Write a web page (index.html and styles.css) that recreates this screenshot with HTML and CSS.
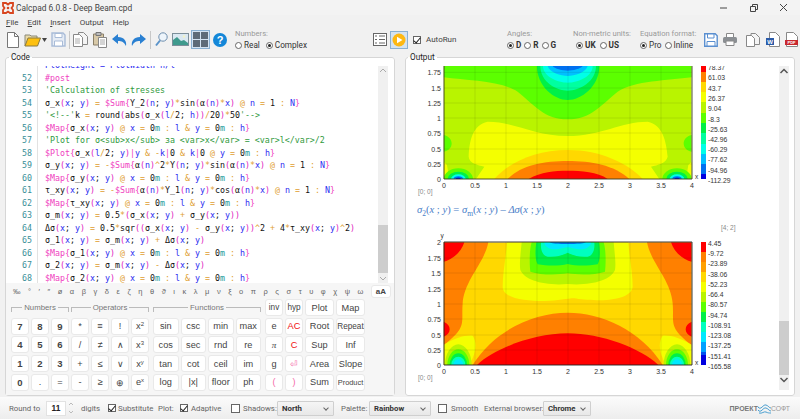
FILE: index.html
```html
<!DOCTYPE html>
<html lang="en">
<head>
<meta charset="utf-8">
<title>Calcpad 6.0.8 - Deep Beam.cpd</title>
<link rel="stylesheet" href="styles.css">
</head>
<body>
<div class="app">
  <header class="titlebar">
    <svg class="app-icon" width="12" height="12" viewBox="0 0 12 12"><path d="M1 1h3l2 1.500L8 1h3v3L9.500 6 11 8v3H8L6 9.500 4 11H1V8l1.500-2L1 4z" fill="none" stroke="#d8451f" stroke-width="1.800"/><circle cx="6" cy="6" r="1.300" fill="#d8451f"/></svg>
    <span class="title">Calcpad 6.0.8 - Deep Beam.cpd</span>
    <span class="win-btns">
      <svg width="10" height="10" viewBox="0 0 10 10"><path d="M1 5h7" stroke="#444" fill="none"/></svg>
      <svg width="10" height="10" viewBox="0 0 10 10"><path d="M1.500 3.500h5v5h-5zM3.500 3.500v-2h5v5h-2" stroke="#444" fill="none"/></svg>
      <svg width="10" height="10" viewBox="0 0 10 10"><path d="M1 1l7 7M8 1l-7 7" stroke="#444" fill="none"/></svg>
    </span>
  </header>
  <nav class="menu">
    <span><u>F</u>ile</span><span><u>E</u>dit</span><span><u>I</u>nsert</span><span>Output</span><span>Help</span>
  </nav>
  <div class="toolbar">
    <svg class="ic m-new" width="12" height="16" viewBox="0 0 12 16"><path d="M.5.500h7l4 4v11H.500z" fill="#fff" stroke="#777"/><path d="M7.500.500v4h4" fill="none" stroke="#777"/></svg>
    <svg class="ic m-open" width="17" height="14" viewBox="0 0 17 14"><path d="M1 13V2h5l1 1h6v2" fill="#e8d9a8" stroke="#8a8a7a"/><path d="M1 13l3-8h12.500l-3 8z" fill="#fdc010" stroke="#8a7a40"/></svg>
    <svg class="ic m-arrow" width="5" height="4" viewBox="0 0 5 4"><path d="M0 0h5L2.500 4z" fill="#444"/></svg>
    <svg class="ic m-save" width="15" height="15" viewBox="0 0 15 15"><path d="M1 1h11l2 2v11H1z" fill="#e6ecf5" stroke="#a9bcd8" stroke-width="1.400"/><path d="M4 1.500h7v4H4zM3.500 9h8v5h-8z" fill="#fff" stroke="#a9bcd8"/></svg>
    <i class="sep m-sep1"></i>
    <svg class="ic m-copy" width="15" height="15" viewBox="0 0 15 15"><path d="M.5 2.500h6l3 3v9h-9z" fill="#fff" stroke="#888"/><path d="M5.500.500h5l4 4v8h-5v-7l-3-3h-1z" fill="#f4f4f4" stroke="#888"/><path d="M2 7h5M2 9h5M2 11h5" stroke="#aaa"/></svg>
    <svg class="ic m-paste" width="14" height="16" viewBox="0 0 14 16"><path d="M.5 2h10v11H.500z" fill="#d8c9a8" stroke="#8a7f68"/><path d="M3 .500h5v3H3z" fill="#bbb" stroke="#777"/><path d="M5.500 5.500h8v10h-8z" fill="#fff" stroke="#888"/><path d="M7 8h5M7 10h5M7 12h5" stroke="#aaa"/></svg>
    <svg class="ic m-undo" width="15" height="12" viewBox="0 0 15 12"><path d="M6 0L0 5l6 5V7c4 0 6 1 8 5 1-5-2-9-8-9z" fill="#2a80d2"/></svg>
    <svg class="ic m-redo" width="15" height="12" viewBox="0 0 15 12"><path d="M9 0l6 5-6 5V7c-4 0-6 1-8 5-1-5 2-9 8-9z" fill="#2a80d2"/></svg>
    <i class="sep m-sep2"></i>
    <svg class="ic m-find" width="13" height="15" viewBox="0 0 13 15"><circle cx="8" cy="5" r="4.200" fill="#eef5fb" stroke="#6f8fae"/><path d="M5 8.500L1 13.500" stroke="#5a93c9" stroke-width="2"/></svg>
    <svg class="ic m-img" width="17" height="13" viewBox="0 0 17 13"><rect x=".5" y=".5" width="16" height="12" fill="#dbe9f2" stroke="#7d8f9a"/><path d="M1 12V7l4-3 4 4 3-1 4 3v2z" fill="#3f9a8d"/><circle cx="12" cy="3.500" r="1.300" fill="#f3f3c8"/></svg>
    <span class="calc-btn m-calc"><i></i><i></i><i></i><i></i></span>
    <span class="help m-help">?</span>
    <div class="opt-group m-numbers">
      <div class="opt-label">Numbers:</div>
      <div class="opt-row"><span class="radio"></span><span class="opt-t g5">Real</span><span class="radio on"></span><span class="opt-t">Complex</span></div>
    </div>
    <svg class="ic m-doc" width="14" height="13" viewBox="0 0 14 13"><rect x=".5" y=".5" width="13" height="12" fill="#fff" stroke="#666"/><path d="M2 3h2M6 3h6M2 6.500h2M6 6.500h6M2 10h2M6 10h6" stroke="#666"/></svg>
    <span class="run-btn m-run"><svg width="14" height="14" viewBox="0 0 14 14"><circle cx="7" cy="7" r="6.500" fill="#fdb813"/><path d="M5 3.800L10.500 7 5 10.200z" fill="#fff"/></svg></span>
    <span class="check on m-auto"></span><span class="auto-t">AutoRun</span>
    <div class="opt-group m-angles">
      <div class="opt-label">Angles:</div>
      <div class="opt-row b"><span class="radio on"></span><span class="opt-t g3">D</span><span class="radio"></span><span class="opt-t g3">R</span><span class="radio"></span><span class="opt-t">G</span></div>
    </div>
    <div class="opt-group m-units">
      <div class="opt-label">Non-metric units:</div>
      <div class="opt-row b ind"><span class="radio on"></span><span class="opt-t g4">UK</span><span class="radio"></span><span class="opt-t">US</span></div>
    </div>
    <div class="opt-group m-eq">
      <div class="opt-label">Equation format:</div>
      <div class="opt-row"><span class="radio on"></span><span class="opt-t g3">Pro</span><span class="radio"></span><span class="opt-t">Inline</span></div>
    </div>
    <svg class="ic m-save2" width="14" height="14" viewBox="0 0 14 14"><path d="M.7.700h10.500l2 2v10.600H.700z" fill="#fff" stroke="#5a8fd0" stroke-width="1.400"/><path d="M3.500 1h6.500v4H3.500zM3 8.500h8V13H3z" fill="#fff" stroke="#5a8fd0"/></svg>
    <svg class="ic m-print" width="14" height="13" viewBox="0 0 14 13"><path d="M3.500.500h7v4h-7z" fill="#fff" stroke="#888"/><rect y="4" width="14" height="6" rx="1.500" fill="#8b8f93"/><path d="M3 8h8v4.500H3z" fill="#fff" stroke="#888"/></svg>
    <svg class="ic m-copy2" width="14" height="14" viewBox="0 0 14 14"><path d="M.5 2.500h5l3 3v8h-8z" fill="#fff" stroke="#888"/><path d="M5 .500h4.500l4 4v7h-5v-6l-3-3H5z" fill="#f4f4f4" stroke="#888"/></svg>
    <svg class="ic m-word" width="14" height="15" viewBox="0 0 14 15"><path d="M3.500.500h6l4 4v10h-10z" fill="#fff" stroke="#888"/><rect y="6" width="8" height="7" fill="#2a5aa8"/><text x="4" y="12" class="w-t">W</text></svg>
    <svg class="ic m-pdf" width="13" height="15" viewBox="0 0 13 15"><path d="M1.500.500h7l4 4v10h-11z" fill="#fff" stroke="#888"/><rect y="8" width="13" height="5" fill="#c8272d"/><text x="6.500" y="12.100" class="p-t">PDF</text></svg>
  </div>

  <main class="panes">
    <fieldset class="group code-group">
      <legend>Code</legend>
      <div class="editor">
        <div class="lines">
          <div class="line first"><span class="no"></span><span class="src b1">PlotHeight = PlotWidth*h/l</span></div>
          <div class="line"><span class="no">52</span><span class="src m">#post</span></div>
          <div class="line"><span class="no">53</span><span class="src c">'Calculation of stresses</span></div>
          <div class="line"><span class="no">54</span><span class="src">σ_x<b>(</b><i>x</i>; <i>y</i><b>)</b> <s>=</s> <em>$Sum{</em>Y_2<b>(</b><i>n</i>; <i>y</i><b>)</b><s>*</s>sin<b>(</b>α<b>(</b><i>n</i><b>)</b><s>*</s><i>x</i><b>)</b> <s>@</s> <i>n</i> <s>=</s> 1 <s>:</s> <i>N</i><em>}</em></span></div>
          <div class="line"><span class="no">55</span><span class="src"><span class="c">'&lt;!--'</span>k <s>=</s> round<b>(</b>abs<b>(</b>σ_x<b>(</b><i>l</i><s>/</s>2; <i>h</i><b>)</b><b>)</b><s>/</s>20<b>)</b><s>*</s>50<span class="c">'--&gt;</span></span></div>
          <div class="line"><span class="no">56</span><span class="src"><em>$Map{</em>σ_x<b>(</b><i>x</i>; <i>y</i><b>)</b> <s>@</s> <i>x</i> <s>=</s> 0<u>m</u> <s>:</s> <i>l</i> <s>&amp;</s> <i>y</i> <s>=</s> 0<u>m</u> <s>:</s> <i>h</i><em>}</em></span></div>
          <div class="line"><span class="no">57</span><span class="src c">'Plot for σ&lt;sub&gt;x&lt;/sub&gt; за &lt;var&gt;x&lt;/var&gt; = &lt;var&gt;l&lt;/var&gt;/2</span></div>
          <div class="line"><span class="no">58</span><span class="src"><em>$Plot{</em>σ_x<b>(</b><i>l</i><s>/</s>2; <i>y</i><b>)</b><em>|</em><i>y</i> <s>&amp;</s> <s>-</s><i>k</i><em>|</em>0 <s>&amp;</s> <i>k</i><em>|</em>0 <s>@</s> <i>y</i> <s>=</s> 0<u>m</u> <s>:</s> <i>h</i><em>}</em></span></div>
          <div class="line"><span class="no">59</span><span class="src">σ_y<b>(</b><i>x</i>; <i>y</i><b>)</b> <s>=</s> <s>-</s><em>$Sum{</em>α<b>(</b><i>n</i><b>)</b><s>^</s>2<s>*</s>Y<b>(</b><i>n</i>; <i>y</i><b>)</b><s>*</s>sin<b>(</b>α<b>(</b><i>n</i><b>)</b><s>*</s><i>x</i><b>)</b> <s>@</s> <i>n</i> <s>=</s> 1 <s>:</s> <i>N</i><em>}</em></span></div>
          <div class="line"><span class="no">60</span><span class="src"><em>$Map{</em>σ_y<b>(</b><i>x</i>; <i>y</i><b>)</b> <s>@</s> <i>x</i> <s>=</s> 0<u>m</u> <s>:</s> <i>l</i> <s>&amp;</s> <i>y</i> <s>=</s> 0<u>m</u> <s>:</s> <i>h</i><em>}</em></span></div>
          <div class="line"><span class="no">61</span><span class="src">τ_xy<b>(</b><i>x</i>; <i>y</i><b>)</b> <s>=</s> <s>-</s><em>$Sum{</em>α<b>(</b><i>n</i><b>)</b><s>*</s>Y_1<b>(</b><i>n</i>; <i>y</i><b>)</b><s>*</s>cos<b>(</b>α<b>(</b><i>n</i><b>)</b><s>*</s><i>x</i><b>)</b> <s>@</s> <i>n</i> <s>=</s> 1 <s>:</s> <i>N</i><em>}</em></span></div>
          <div class="line"><span class="no">62</span><span class="src"><em>$Map{</em>τ_xy<b>(</b><i>x</i>; <i>y</i><b>)</b> <s>@</s> <i>x</i> <s>=</s> 0<u>m</u> <s>:</s> <i>l</i> <s>&amp;</s> <i>y</i> <s>=</s> 0<u>m</u> <s>:</s> <i>h</i><em>}</em></span></div>
          <div class="line"><span class="no">63</span><span class="src">σ_m<b>(</b><i>x</i>; <i>y</i><b>)</b> <s>=</s> 0.5<s>*</s><b>(</b>σ_x<b>(</b><i>x</i>; <i>y</i><b>)</b> <s>+</s> σ_y<b>(</b><i>x</i>; <i>y</i><b>)</b><b>)</b></span></div>
          <div class="line"><span class="no">64</span><span class="src">Δσ<b>(</b><i>x</i>; <i>y</i><b>)</b> <s>=</s> 0.5<s>*</s>sqr<b>(</b><b>(</b>σ_x<b>(</b><i>x</i>; <i>y</i><b>)</b> <s>-</s> σ_y<b>(</b><i>x</i>; <i>y</i><b>)</b><b>)</b><s>^</s>2 <s>+</s> 4<s>*</s>τ_xy<b>(</b><i>x</i>; <i>y</i><b>)</b><s>^</s>2<b>)</b></span></div>
          <div class="line"><span class="no">65</span><span class="src">σ_1<b>(</b><i>x</i>; <i>y</i><b>)</b> <s>=</s> σ_m<b>(</b><i>x</i>; <i>y</i><b>)</b> <s>+</s> Δσ<b>(</b><i>x</i>; <i>y</i><b>)</b></span></div>
          <div class="line"><span class="no">66</span><span class="src"><em>$Map{</em>σ_1<b>(</b><i>x</i>; <i>y</i><b>)</b> <s>@</s> <i>x</i> <s>=</s> 0<u>m</u> <s>:</s> <i>l</i> <s>&amp;</s> <i>y</i> <s>=</s> 0<u>m</u> <s>:</s> <i>h</i><em>}</em></span></div>
          <div class="line"><span class="no">67</span><span class="src">σ_2<b>(</b><i>x</i>; <i>y</i><b>)</b> <s>=</s> σ_m<b>(</b><i>x</i>; <i>y</i><b>)</b> <s>-</s> Δσ<b>(</b><i>x</i>; <i>y</i><b>)</b></span></div>
          <div class="line"><span class="no">68</span><span class="src"><em>$Map{</em>σ_2<b>(</b><i>x</i>; <i>y</i><b>)</b> <s>@</s> <i>x</i> <s>=</s> 0<u>m</u> <s>:</s> <i>l</i> <s>&amp;</s> <i>y</i> <s>=</s> 0<u>m</u> <s>:</s> <i>h</i><em>}</em></span></div>
        </div>
        <div class="vscroll">
          <svg class="chev" width="10" height="10" viewBox="0 0 10 10"><path d="M2 6l3-3 3 3" fill="none" stroke="#aaa"/></svg>
          <div class="sb-gap code-gap"></div>
          <div class="thumb code-thumb"></div>
          <svg class="chev" width="10" height="10" viewBox="0 0 10 10"><path d="M2 4l3 3 3-3" fill="none" stroke="#aaa"/></svg>
        </div>
      </div>
      <div class="keyboard">
        <div class="greek">
          <span>‰</span><span>°</span><span>′</span><span>″</span><span>ø</span><span>α</span><span>β</span><span>γ</span><span>δ</span><span>ε</span><span>ζ</span><span>η</span><span>θ</span><span>ϑ</span><span>ι</span><span>κ</span><span>λ</span><span>μ</span><span>ν</span><span>ξ</span><span>ο</span><span>π</span><span>ρ</span><span>ς</span><span>σ</span><span>τ</span><span>υ</span><span>φ</span><span>χ</span><span>ψ</span><span>ω</span><span class="key aa">aA</span>
        </div>
        <div class="keys">
          <div class="pad pad-num">
            <div class="head span3">Numbers</div><div class="head span4">Operators</div>
            <span class="key big">7</span><span class="key big">8</span><span class="key big">9</span><span class="key">*</span><span class="key">≡</span><span class="key">!</span><span class="key">x<sup>2</sup></span>
            <span class="key big">4</span><span class="key big">5</span><span class="key big">6</span><span class="key">/</span><span class="key">≠</span><span class="key">∧</span><span class="key">x<sup>3</sup></span>
            <span class="key big">1</span><span class="key big">2</span><span class="key big">3</span><span class="key">+</span><span class="key">≤</span><span class="key">∨</span><span class="key">x<sup>y</sup></span>
            <span class="key big">0</span><span class="key">.</span><span class="key">=</span><span class="key">-</span><span class="key">≥</span><span class="key">⊕</span><span class="key">e<sup>x</sup></span>
          </div>
          <div class="pad pad-fn">
            <div class="head span4">Functions</div>
            <span class="key">sin</span><span class="key">csc</span><span class="key">min</span><span class="key">max</span>
            <span class="key">cos</span><span class="key">sec</span><span class="key">rnd</span><span class="key">re</span>
            <span class="key">tan</span><span class="key">cot</span><span class="key">ceil</span><span class="key">im</span>
            <span class="key">log</span><span class="key">|x|</span><span class="key">floor</span><span class="key">ph</span>
          </div>
          <div class="pad pad-side">
            <span class="key sm">inv</span><span class="key sm">hyp</span><span class="key">Plot</span><span class="key">Map</span>
            <span class="key">e</span><span class="key red">AC</span><span class="key">Root</span><span class="key sm">Repeat</span>
            <span class="key serif">π</span><span class="key red">C</span><span class="key">Sup</span><span class="key">Inf</span>
            <span class="key">g</span><span class="key pink">⏎</span><span class="key">Area</span><span class="key">Slope</span>
            <span class="key pink">(</span><span class="key pink">)</span><span class="key">Sum</span><span class="key xs">Product</span>
          </div>
        </div>
      </div>
    </fieldset>

    <fieldset class="group out-group">
      <legend>Output</legend>
      <div class="out">
        <div class="out-content">
          <svg class="plot" width="330" height="130" viewBox="405 66 330 130">
            <defs><clipPath id="clip1"><rect x="128" y="48" width="744" height="339"/></clipPath><clipPath id="clip2"><rect x="128" y="37" width="744" height="368"/></clipPath></defs>
            <g transform="translate(400 50) scale(.33333)" clip-path="url(#clip1)">
              <rect x="128" y="48" width="744" height="339" fill="#b9f400"/>
              <path d="M128 48V82C200 92 300 92 350 125 400 165 430 208 500 208S600 165 650 125C700 92 800 92 872 82V48z" fill="#5cff00"/>
              <path d="M408 48C408 110 460 150 500 150S595 110 595 48z" fill="#00f048"/>
              <path d="M418 48C418 95 465 122 500 122S585 95 585 48z" fill="#00ffa0"/>
              <path d="M426 48C426 80 470 98 500 98S575 80 575 48z" fill="#00ffe8"/>
              <path d="M440 48C445 68 480 78 500 78S555 68 560 48z" fill="#00c0ff"/>
              <path d="M455 48C460 56 485 62 500 62S540 56 545 48z" fill="#0070f0"/>
              <path d="M203 320C205 270 215 225 260 215 340 215 400 258 500 258S660 215 740 215C785 225 795 270 800 320 795 340 770 345 750 350L775 387H225L250 350C230 345 205 340 203 320z" fill="#f4ff00"/>
              <path d="M128 335L138 345 145 387H128zM872 335L862 345 855 387H872z" fill="#f4ff00"/>
              <path d="M128 255C160 262 160 300 128 305zM872 255C840 262 840 300 872 305z" fill="#5cff00"/>
              <path d="M280 387C320 340 400 300 500 300S680 340 725 387z" fill="#ffd800"/>
              <path d="M320 387C360 345 430 333 500 333S640 345 685 387z" fill="#ff8000"/>
              <path d="M383 387C420 365 460 362 500 362S590 365 620 387z" fill="#ff0000"/>
              <ellipse cx="172" cy="387" rx="44" ry="32" fill="#5cff00"/><ellipse cx="172" cy="387" rx="32" ry="22" fill="#00f048"/><ellipse cx="172" cy="387" rx="22" ry="14" fill="#00ffe8"/><ellipse cx="172" cy="387" rx="14" ry="8" fill="#0070f0"/><ellipse cx="172" cy="387" rx="8" ry="4" fill="#0000e0"/>
              <ellipse cx="828" cy="387" rx="44" ry="32" fill="#5cff00"/><ellipse cx="828" cy="387" rx="32" ry="22" fill="#00f048"/><ellipse cx="828" cy="387" rx="22" ry="14" fill="#00ffe8"/><ellipse cx="828" cy="387" rx="14" ry="8" fill="#0070f0"/><ellipse cx="828" cy="387" rx="8" ry="4" fill="#0000e0"/>
            </g>
            <path class="grid" d="M443 72.300h248M443 88h248M443 103h248M443 118h248M443 133h248M443 149h248M443 164h248M474 66v113M505 66v113M536 66v113M567 66v113M598 66v113M629 66v113M660 66v113"/>
            <path class="frame-soft" d="M443 66v113h248V66"/>
            <rect x="700" y="66" width="5" height="10" fill="#f00"/><rect x="700" y="72" width="5" height="10" fill="#ff8000"/><rect x="700" y="82" width="5" height="10" fill="#ffd800"/><rect x="700" y="92" width="5" height="10" fill="#f4ff00"/><rect x="700" y="102" width="5" height="11" fill="#b9f400"/><rect x="700" y="113" width="5" height="10" fill="#5cff00"/><rect x="700" y="123" width="5" height="10" fill="#00f048"/><rect x="700" y="133" width="5" height="11" fill="#00ffa0"/><rect x="700" y="144" width="5" height="10" fill="#00ffe8"/><rect x="700" y="154" width="5" height="10" fill="#00c0ff"/><rect x="700" y="164" width="5" height="10" fill="#0070f0"/><rect x="700" y="174" width="5" height="5" fill="#0000e0"/>
            <g class="yl"><text x="440" y="75">1.75</text><text x="440" y="91">1.5</text><text x="440" y="106">1.25</text><text x="440" y="121">1</text><text x="440" y="136">0.75</text><text x="440" y="152">0.5</text><text x="440" y="167">0.25</text><text x="440" y="182">0</text></g>
            <g class="xl"><text x="443" y="188">0</text><text x="474" y="188">0.5</text><text x="505" y="188">1</text><text x="536" y="188">1.5</text><text x="567" y="188">2</text><text x="598" y="188">2.5</text><text x="629" y="188">3</text><text x="660" y="188">3.5</text><text x="691" y="188">4</text></g>
            <text class="lbl" x="694" y="179">x</text>
            <g class="cb"><text x="707" y="70">78.37</text><text x="707" y="80">61.03</text><text x="707" y="91">43.7</text><text x="707" y="101">26.37</text><text x="707" y="111">9.04</text><text x="707" y="122">-8.3</text><text x="707" y="132">-25.63</text><text x="707" y="142">-42.96</text><text x="707" y="152">-60.29</text><text x="707" y="162">-77.62</text><text x="707" y="173">-94.96</text><text x="707" y="183">-112.29</text></g>
            <text class="coord" x="417" y="194">[0; 0]</text>
          </svg>
          <div class="formula"><i>σ</i><sub>2</sub><span class="par">(</span><i>x</i> ; <i>y</i><span class="par">)</span> = <i>σ</i><sub>m</sub><span class="par">(</span><i>x</i> ; <i>y</i><span class="par">)</span> – <i>Δσ</i><span class="par">(</span><i>x</i> ; <i>y</i><span class="par">)</span></div>
          <div class="coord-r">[4; 2]</div>
          <svg class="plot" width="330" height="156" viewBox="405 231 330 156">
            <g transform="translate(400 230) scale(.33333)" clip-path="url(#clip2)">
              <rect x="128" y="37" width="744" height="368" fill="#ffd800"/>
              <path d="M128 37H262C250 100 190 150 185 220 180 280 200 290 128 345zM872 37H738C750 100 810 150 815 220 820 280 800 290 872 345z" fill="#ff8000"/>
              <path d="M128 37H190C180 70 150 90 128 95zM872 37H810C820 70 850 90 872 95z" fill="#f00"/>
              <path d="M128 275C152 285 152 310 128 320zM872 275C848 285 848 310 872 320z" fill="#f00"/>
              <path d="M318 37C315 80 305 130 305 170 305 205 370 213 430 213 470 213 500 205 520 205 560 213 690 220 695 170 695 130 685 80 682 37z" fill="#f4ff00"/>
              <path d="M362 37C358 80 355 100 358 120 370 150 430 168 500 162 570 168 630 150 642 120 645 100 642 80 638 37z" fill="#b9f400"/>
              <path d="M392 37C385 60 385 100 388 125 420 136 470 135 500 130 530 135 580 136 612 125 615 100 615 60 608 37z" fill="#5cff00"/>
              <path d="M406 37C402 60 402 90 410 103 440 108 475 108 500 102 525 108 560 108 590 103 598 90 598 60 594 37z" fill="#00f048"/>
              <path d="M420 37C418 60 425 78 440 80 470 82 485 75 500 68 515 75 530 82 560 80 575 78 582 60 580 37z" fill="#00ffc0"/>
              <path d="M430 37C430 50 445 58 460 58 480 58 490 52 500 52 510 52 520 58 540 58 555 58 570 50 570 37z" fill="#00e8ff"/>
              <path d="M445 37C450 43 550 43 555 37z" fill="#0040d8"/>
              <path d="M215 405C280 300 400 248 500 248S720 300 785 405z" fill="#ff8000"/>
              <path d="M228 405C280 355 400 310 500 310S720 355 772 405z" fill="#f00"/>
              <path d="M128 345C160 325 190 315 215 317 230 340 225 370 205 405H128zM872 345C840 325 810 315 785 317 770 340 775 370 795 405H872z" fill="#f4ff00"/>
              <ellipse cx="172" cy="405" rx="40" ry="62" fill="#b9f400"/><ellipse cx="172" cy="405" rx="33" ry="47" fill="#5cff00"/><ellipse cx="172" cy="405" rx="26" ry="35" fill="#00f048"/><ellipse cx="172" cy="405" rx="21" ry="25" fill="#00ffc0"/><ellipse cx="172" cy="405" rx="15" ry="17" fill="#00e8ff"/>
              <ellipse cx="828" cy="405" rx="40" ry="62" fill="#b9f400"/><ellipse cx="828" cy="405" rx="33" ry="47" fill="#5cff00"/><ellipse cx="828" cy="405" rx="26" ry="35" fill="#00f048"/><ellipse cx="828" cy="405" rx="21" ry="25" fill="#00ffc0"/><ellipse cx="828" cy="405" rx="15" ry="17" fill="#00e8ff"/>
            </g>
            <path class="grid" d="M443 258h248M443 273h248M443 289h248M443 304h248M443 319h248M443 335h248M443 350h248M474 242v123M505 242v123M536 242v123M567 242v123M598 242v123M629 242v123M660 242v123"/>
            <path class="frame" d="M443 242h248v123H443z"/>
            <rect x="700" y="242" width="5" height="10.500" fill="#f00"/><rect x="700" y="252" width="5" height="10.500" fill="#ff8000"/><rect x="700" y="262" width="5" height="10.500" fill="#ffa000"/><rect x="700" y="272" width="5" height="10.500" fill="#ffd800"/><rect x="700" y="282" width="5" height="10.500" fill="#f4ff00"/><rect x="700" y="292" width="5" height="10.500" fill="#b9f400"/><rect x="700" y="302" width="5" height="10.500" fill="#5cff00"/><rect x="700" y="312" width="5" height="10.500" fill="#00f048"/><rect x="700" y="322" width="5" height="10.500" fill="#00ffc0"/><rect x="700" y="332" width="5" height="10.500" fill="#00e8ff"/><rect x="700" y="342" width="5" height="10.500" fill="#00a0ff"/><rect x="700" y="352" width="5" height="6" fill="#0050f0"/><rect x="700" y="355" width="5" height="10" fill="#0000e0"/>
            <text class="lbl" x="441" y="238" text-anchor="middle">y</text>
            <g class="yl"><text x="440" y="245">2</text><text x="440" y="261">1.75</text><text x="440" y="276">1.5</text><text x="440" y="292">1.25</text><text x="440" y="307">1</text><text x="440" y="322">0.75</text><text x="440" y="338">0.5</text><text x="440" y="353">0.25</text><text x="440" y="368">0</text></g>
            <g class="xl"><text x="443" y="374">0</text><text x="474" y="374">0.5</text><text x="505" y="374">1</text><text x="536" y="374">1.5</text><text x="567" y="374">2</text><text x="598" y="374">2.5</text><text x="629" y="374">3</text><text x="660" y="374">3.5</text><text x="691" y="374">4</text></g>
            <text class="lbl" x="694" y="365">x</text>
            <g class="cb"><text x="707" y="246">4.45</text><text x="707" y="256">-9.72</text><text x="707" y="266">-23.89</text><text x="707" y="277">-38.06</text><text x="707" y="287">-52.23</text><text x="707" y="297">-66.4</text><text x="707" y="307">-80.57</text><text x="707" y="318">-94.74</text><text x="707" y="328">-108.91</text><text x="707" y="338">-123.08</text><text x="707" y="348">-137.25</text><text x="707" y="359">-151.41</text><text x="707" y="369">-165.58</text></g>
            <text class="coord" x="417" y="380">[0; 0]</text>
          </svg>
        </div>
        <div class="vscroll out-scroll">
          <svg class="chev" width="10" height="10" viewBox="0 0 10 10"><path d="M1.500 7L5 3.500 8.500 7" fill="none" stroke="#555" stroke-width="1.500"/></svg>
          <div class="sb-gap out-gap"></div>
          <div class="thumb out-thumb"></div>
          <svg class="chev" width="10" height="10" viewBox="0 0 10 10"><path d="M1.500 3L5 6.500 8.500 3" fill="none" stroke="#555" stroke-width="1.500"/></svg>
        </div>
      </div>
    </fieldset>
  </main>

  <footer class="status">
    <span class="st-round">Round to</span>
    <span class="num-input">11</span>
    <span class="spin"><svg width="8" height="14" viewBox="0 0 8 14"><path d="M2 4l2-2 2 2M2 10l2 2 2-2" fill="none" stroke="#bbb"/></svg></span>
    <span class="st-digits">digits</span>
    <span class="check on"></span><span class="t-sub">Substitute</span>
    <span class="st-plot">Plot:</span>
    <span class="check on"></span><span class="t-ad">Adaptive</span>
    <span class="check st-sh"></span><span class="t-sh">Shadows:</span>
    <span class="select sel-n">North</span>
    <span class="st-pal">Palette:</span>
    <span class="select sel-r">Rainbow</span>
    <span class="check st-sm"></span><span class="t-sm">Smooth</span>
    <span class="st-ext">External browser:</span>
    <span class="select sel-c">Chrome</span>
    <span class="logo"><b>ПРОЕКТ</b><svg width="13" height="11" viewBox="0 0 13 11"><path d="M0 4C3 8 5 1 8 2s3 3 5 3M0 7c3 4 5-3 8-2s3 3 5 3M1 10c3 1 5-2 7-1s3 1 5 1" fill="none" stroke="#4a9fd0" stroke-width="1"/></svg><span>СОФТ</span></span>
  </footer>
</div>
</body>
</html>
```
FILE: styles.css
```css
* { box-sizing: border-box; }
html, body { margin: 0; padding: 0; }
body { width: 800px; height: 419px; overflow: hidden; font-family: Roboto, "Liberation Sans", sans-serif; color: #333; }
.app { width: 800px; height: 419px; background: #f1f1f1; display: flex; flex-direction: column; }

.titlebar { height: 15px; display: flex; align-items: center; padding: 0 0 0 2px; background: #f3f3f3; }
.title { margin-left: 2px; font-size: 8.4px; color: #444; padding-top: 1px; }
.app-icon { flex: none; margin-top: 1px; }
.win-btns { margin-left: auto; display: flex; gap: 20px; padding-right: 11px; }

.menu { height: 15px; display: flex; align-items: center; padding-left: 6px; gap: 9px; font-size: 8px; color: #444; }

.toolbar { height: 22px; display: flex; align-items: center; padding-bottom: 3px; }
.ic { flex: none; display: block; }
.sep { flex: none; width: 1px; height: 18px; background: #c8c8c8; }
.m-new { margin-left: 7px; } .m-open { margin-left: 5px; } .m-arrow { margin-left: 1px; } .m-save { margin-left: 4px; }
.m-sep1 { margin-left: 3px; } .m-copy { margin-left: 3px; } .m-paste { margin-left: 5px; } .m-undo { margin-left: 5px; }
.m-redo { margin-left: 4px; } .m-sep2 { margin-left: 4px; } .m-find { margin-left: 4px; } .m-img { margin-left: 4px; }
.m-calc { margin-left: 2px; } .m-help { margin-left: 3px; }
.m-numbers { margin-left: 8px; width: 138px; }
.m-run { margin-left: 3px; } .m-auto { margin-left: 5px; }
.m-angles { width: 66px; } .m-units { width: 67px; } .m-eq { width: 64px; }
.m-print { margin-left: 5px; } .m-copy2 { margin-left: 9px; } .m-word { margin-left: 6px; } .m-pdf { margin-left: 5px; }

.calc-btn { flex: none; width: 19px; height: 19px; display: grid; grid-template-columns: 7px 7px; grid-auto-rows: 7px; gap: 1px; justify-content: center; align-content: center; background: #d4e3f1; border: 1px solid #8ab0d2; }
.calc-btn i { background: #5e6b78; }
.help { flex: none; width: 14px; height: 14px; border-radius: 50%; background: #1487d8; color: #fff; font: bold 11px/14px "Liberation Sans", sans-serif; text-align: center; }
.opt-group { flex: none; display: flex; flex-direction: column; }
.opt-label { font-size: 7.6px; line-height: 10px; color: #999; margin-bottom: 1px; white-space: nowrap; }
.opt-row { display: flex; align-items: center; font-size: 8.2px; line-height: 11px; color: #333; white-space: nowrap; }
.opt-row.b { font-weight: 700; }
.ind { padding-left: 3px; }
.radio { flex: none; width: 7px; height: 7px; border: 1px solid #666; border-radius: 50%; background: #fff; margin-right: 2px; position: relative; }
.radio.on::after { content: ""; position: absolute; left: 1px; top: 1px; width: 3px; height: 3px; border-radius: 50%; background: #222; }
.g5 { margin-right: 6px; } .g4 { margin-right: 4px; } .g3 { margin-right: 3px; }
.run-btn { flex: none; width: 18px; height: 18px; background: #d4e3f1; border: 1px solid #8ab0d2; display: flex; align-items: center; justify-content: center; }
.check { flex: none; width: 8px; height: 8px; border: 1px solid #666; background: #fff; position: relative; }
.check.on::after { content: ""; position: absolute; left: 1px; top: -1px; width: 3px; height: 6px; border: solid #222; border-width: 0 1px 1px 0; transform: rotate(40deg); }
.auto-t { flex: none; margin-left: 5px; font-size: 8px; width: 81px; color: #444; }
.w-t { font: bold 6px "Liberation Sans", sans-serif; fill: #fff; text-anchor: middle; }
.p-t { font: bold 4px "Liberation Sans", sans-serif; fill: #fff; text-anchor: middle; }

.panes { height: 345px; display: flex; gap: 10px; padding: 0 5px; }
.group { flex: none; width: 390px; margin: 0; padding: 4px 0 0; height: 344px; border: 1px solid #d6d6d6; border-radius: 3px; background: #fff; min-width: 0; display: flex; flex-direction: column; }
.group legend { margin-left: 3px; padding: 0 2px; font-size: 8.2px; line-height: 10px; color: #222; }
.out-group legend { margin-left: 2px; }

.editor { flex: none; height: 217px; display: flex; padding-right: 6px; overflow: hidden; }
.lines { flex: 1; min-width: 0; overflow: hidden; }
.line { display: flex; height: 12.5px; font: 8.3px/12.5px "DejaVu Sans Mono", "Liberation Mono", monospace; white-space: pre; }
.first { margin-top: -7px; }
.no { flex: none; width: 32px; padding-right: 5px; text-align: right; color: #3a8f98; border-right: 1px solid #e2e2e2; }
.src { padding-left: 7px; color: #111; }
.src b { font-weight: normal; color: #e020c0; }
.src i { font-style: normal; color: #2a2af0; }
.src s { text-decoration: none; color: #e0a030; }
.src u { text-decoration: none; color: #1a9a9a; }
.src em { font-style: normal; color: #f040c0; }
.c { color: #2f9a40; }
.m { color: #f040c0; }
.b1 { color: #2a2af0; }

.vscroll { flex: none; width: 10px; background: #f0f0f0; display: flex; flex-direction: column; }
.chev { flex: none; display: block; }
.thumb { flex: none; background: #cdcdcd; }
.code-gap { height: 149px; } .code-thumb { height: 48px; }
.out-gap { height: 245px; } .out-thumb { height: 54px; }

.keyboard { flex: 1; background: #f6f6f6; padding: 1px 0 0 5px; }
.greek { height: 14px; display: flex; align-items: center; justify-content: space-between; padding: 0 23px 0 2px; font: 7.5px "Liberation Sans", "DejaVu Sans", sans-serif; color: #666; }
.keys { display: flex; gap: 4px; margin-top: 1px; }
.pad { display: grid; grid-auto-rows: 17px; row-gap: 1.7px; column-gap: 2px; }
.pad-num { grid-template-columns: repeat(7, 18px); }
.pad-fn { grid-template-columns: repeat(4, 25.5px); }
.pad-side { grid-template-columns: 18px 18px 29px 29px; }
.span3 { grid-column: span 3; } .span4 { grid-column: span 4; }
.head { display: flex; align-items: center; gap: 2px; font: 7.8px "Liberation Sans", sans-serif; color: #777; white-space: nowrap; }
.head::before, .head::after { content: ""; flex: 1; height: 4px; margin-top: 4px; border-top: 1px solid #bbb; }
.head::before { border-left: 1px solid #bbb; }
.head::after { border-right: 1px solid #bbb; }
.key { display: flex; align-items: center; justify-content: center; background: #fff; border: 1px solid #e9e9e9; border-radius: 3px; font: 9.2px "Liberation Sans", sans-serif; color: #444; white-space: nowrap; }
.key sup { font-size: 6px; line-height: 0; margin-top: -4px; }
.big { font-weight: bold; font-size: 9.5px; }
.sm { font-size: 8.2px; } .xs { font-size: 7.4px; }
.red { color: #f01010; } .pink { color: #f56aa8; }
.serif { font-family: "Liberation Serif", serif; font-style: italic; }
.aa { width: 20px; height: 13px; font-weight: bold; font-size: 8px; flex: none; position: relative; right: -20px; margin-left: -20px; }

.out { flex: none; height: 324px; display: flex; padding-right: 5px; }
.out-content { flex: 1; min-width: 0; overflow: hidden; }
.out-scroll { height: 324px; }
.plot { display: block; }
.plot text { font-family: "Liberation Sans", sans-serif; }
.grid { fill: none; stroke: #000; stroke-opacity: .09; stroke-width: 1; }
.frame { fill: none; stroke: #222; stroke-width: .9; }
.frame-soft { fill: none; stroke: #3a3a20; stroke-width: .9; }
.yl text { font-size: 7px; text-anchor: end; fill: #333; }
.xl text { font-size: 7px; text-anchor: middle; fill: #333; }
.cb text { font-size: 6.8px; fill: #333; }
.lbl { font-size: 6.5px; fill: #333; }
.coord { font-size: 6.5px; fill: #888; }
.formula { height: 21px; padding: 7px 0 0 11px; font: 10.6px/14px "Liberation Serif", serif; color: #4a7ec8; white-space: pre; }
.formula sub { font-size: 7.5px; line-height: 0; font-style: normal; }
.formula i { font-style: italic; }
.coord-r { height: 14px; padding: 6px 0 0 315px; font: 6.5px/10px "Liberation Sans", sans-serif; color: #888; }

.status { flex: 1; display: flex; align-items: center; padding-left: 9px; background: linear-gradient(#fbfbfb, #ededed); font-size: 7.8px; color: #666; white-space: nowrap; }
.st-round { width: 37px; }
.num-input { flex: none; width: 20px; height: 15px; background: #fff; border: 1px solid #e2e2e2; text-align: center; font: bold 8.3px/13px "Liberation Sans", sans-serif; color: #222; }
.spin { flex: none; width: 9px; height: 14px; margin-left: 1px; display: flex; }
.st-digits { margin-left: 5px; width: 27px; }
.t-sub { margin-left: 2px; width: 33px; }
.st-plot { margin-left: 7px; width: 22px; }
.t-ad { margin-left: 3px; width: 29px; }
.st-sh { margin-left: 11px; width: 9px; height: 9px; }
.t-sh { margin-left: 3px; width: 31px; }
.select { flex: none; height: 15px; background: linear-gradient(#f5f5f5, #e8e8e8); border: 1px solid #cfcfcf; border-radius: 1px; font: bold 7.8px/13px Roboto, sans-serif; color: #333; padding-left: 4px; position: relative; }
.select::after { content: ""; position: absolute; right: 5px; top: 4px; width: 3px; height: 3px; border: solid #666; border-width: 0 1px 1px 0; transform: rotate(45deg); }
.sel-n { width: 57px; margin-left: 3px; }
.st-pal { margin-left: 7px; width: 28px; }
.sel-r { width: 62px; }
.st-sm { margin-left: 7px; width: 9px; height: 9px; }
.t-sm { margin-left: 4px; width: 25px; }
.st-ext { margin-left: 8px; width: 56px; }
.sel-c { width: 48px; margin-left: 3px; }
.logo { margin-left: auto; margin-right: 10px; display: flex; align-items: center; font: 7px "Liberation Sans", sans-serif; color: #777; }
.logo span { font-size: 6.8px; color: #999; }
```
